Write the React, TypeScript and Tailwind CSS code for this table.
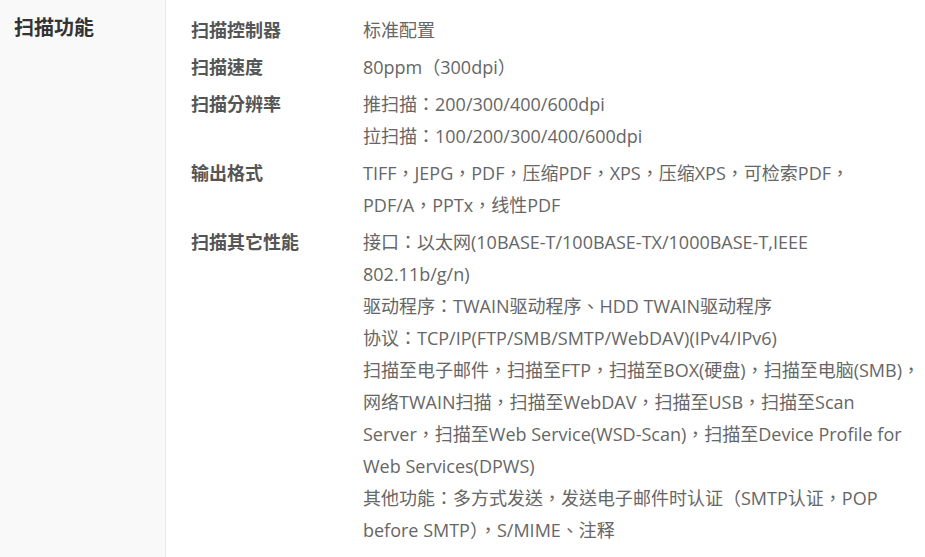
const rows: { label: string; lines: string[] }[] = [
  { label: "扫描控制器", lines: ["标准配置"] },
  { label: "扫描速度", lines: ["80ppm（300dpi）"] },
  { label: "扫描分辨率", lines: ["推扫描：200/300/400/600dpi", "拉扫描：100/200/300/400/600dpi"] },
  { label: "输出格式", lines: ["TIFF，JEPG，PDF，压缩PDF，XPS，压缩XPS，可检索PDF，", "PDF/A，PPTx，线性PDF"] },
  {
    label: "扫描其它性能",
    lines: [
      "接口：以太网(10BASE-T/100BASE-TX/1000BASE-T,IEEE",
      "802.11b/g/n)",
      "驱动程序：TWAIN驱动程序、HDD TWAIN驱动程序",
      "协议：TCP/IP(FTP/SMB/SMTP/WebDAV)(IPv4/IPv6)",
      "扫描至电子邮件，扫描至FTP，扫描至BOX(硬盘)，扫描至电脑(SMB)，",
      "网络TWAIN扫描，扫描至WebDAV，扫描至USB，扫描至Scan",
      "Server，扫描至Web Service(WSD-Scan)，扫描至Device Profile for",
      "Web Services(DPWS)",
      "其他功能：多方式发送，发送电子邮件时认证（SMTP认证，POP",
      "before SMTP），S/MIME、注释",
    ],
  },
];

export default function App() {
  return (
    <div className="flex h-[557px] w-[925px] overflow-hidden bg-white font-['Open_Sans','Noto_Sans_CJK_TC',sans-serif]">
      <div className="w-[166px] shrink-0 border-r border-[#e8e8e8] bg-[#f9f9f9] px-[14px] pt-[14px]">
        <h2 className="text-[20px] font-bold leading-[28px] text-[#333]">扫描功能</h2>
      </div>
      <div className="flex-1 pl-[25px] pt-[14px]">
        {rows.map((r) => (
          <div key={r.label} className="mb-[5px] flex text-[18px] leading-[32px]">
            <div className="w-[172px] shrink-0 font-bold text-[#555]">{r.label}</div>
            <div className="text-[#666]">
              {r.lines.map((l) => (
                <div key={l} className="whitespace-nowrap">
                  {l}
                </div>
              ))}
            </div>
          </div>
        ))}
      </div>
    </div>
  );
}
